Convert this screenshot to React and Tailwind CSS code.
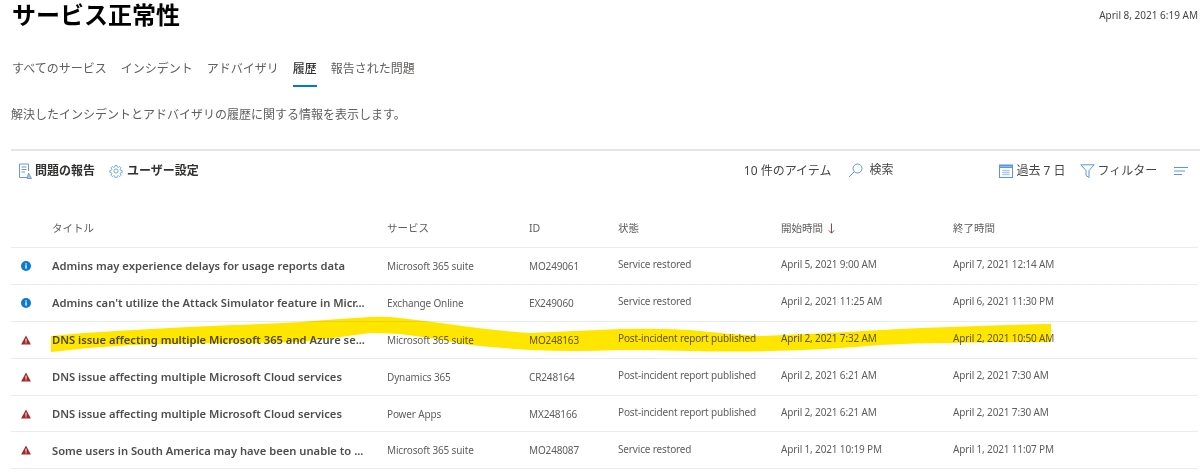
import React from "react";

const rows = [
  { k: "info", t: "Admins may experience delays for usage reports data", s: "Microsoft 365 suite", id: "MO249061", st: "Service restored", a: "April 5, 2021 9:00 AM", b: "April 7, 2021 12:14 AM" },
  { k: "info", t: "Admins can't utilize the Attack Simulator feature in Micr...", s: "Exchange Online", id: "EX249060", st: "Service restored", a: "April 2, 2021 11:25 AM", b: "April 6, 2021 11:30 PM" },
  { k: "warn", t: "DNS issue affecting multiple Microsoft 365 and Azure se...", s: "Microsoft 365 suite", id: "MO248163", st: "Post-incident report published", a: "April 2, 2021 7:32 AM", b: "April 2, 2021 10:50 AM" },
  { k: "warn", t: "DNS issue affecting multiple Microsoft Cloud services", s: "Dynamics 365", id: "CR248164", st: "Post-incident report published", a: "April 2, 2021 6:21 AM", b: "April 2, 2021 7:30 AM" },
  { k: "warn", t: "DNS issue affecting multiple Microsoft Cloud services", s: "Power Apps", id: "MX248166", st: "Post-incident report published", a: "April 2, 2021 6:21 AM", b: "April 2, 2021 7:30 AM" },
  { k: "warn", t: "Some users in South America may have been unable to ...", s: "Microsoft 365 suite", id: "MO248087", st: "Service restored", a: "April 1, 2021 10:19 PM", b: "April 1, 2021 11:07 PM" },
];

const cols = "grid grid-cols-[41px_335px_142px_89px_163px_172px_1fr] items-center";

function InfoIcon() {
  return (
    <svg width="10" height="10" viewBox="0 0 10 10" className="ml-[10px]">
      <circle cx="5" cy="5" r="5" fill="#0b78d4" />
      <rect x="4.3" y="4.2" width="1.4" height="3.4" fill="#fff" />
      <rect x="4.3" y="2.3" width="1.4" height="1.3" fill="#fff" />
    </svg>
  );
}

function WarnIcon() {
  return (
    <svg width="10" height="10" viewBox="0 0 10 10" className="ml-[10px]">
      <path d="M5 0.4 L9.9 9.6 H0.1 Z" fill="#a4262c" />
      <rect x="4.5" y="3.6" width="1" height="3.2" fill="#fff" />
      <rect x="4.5" y="7.4" width="1" height="1" fill="#fff" />
    </svg>
  );
}

function ReportIcon() {
  return (
    <svg width="14" height="16" viewBox="0 0 14 16" fill="none" stroke="#6b97d2" strokeWidth="1">
      <path d="M9 14.5H1.5V1H10.5V8" />
      <path d="M3.5 4H8.5M3.5 6.5H8.5M3.5 9H7" />
      <path d="M9 15.5 L10.5 10 L13.5 15.5 Z" fill="#a9c5ea" stroke="#5a8fd0" strokeWidth="0.8" />
    </svg>
  );
}

function GearIcon() {
  return (
    <svg width="14" height="14" viewBox="0 0 24 24" fill="none" stroke="#6b9fdc" strokeWidth="1.6">
      <circle cx="12" cy="12" r="3.6" />
      <path d="M10.2 1.5h3.6l.6 3.1 1.9.8 2.6-1.8 2.5 2.5-1.8 2.6.8 1.9 3.1.6v3.6l-3.1.6-.8 1.9 1.8 2.6-2.5 2.5-2.6-1.8-1.9.8-.6 3.1h-3.6l-.6-3.1-1.9-.8-2.6 1.8-2.5-2.5 1.8-2.6-.8-1.9-3.1-.6v-3.6l3.1-.6.8-1.9-1.8-2.6 2.5-2.5 2.6 1.8 1.9-.8z" transform="translate(12 12) scale(.92) translate(-12 -12)" />
    </svg>
  );
}

function SearchIcon() {
  return (
    <svg width="15" height="15" viewBox="0 0 15 15" fill="none" stroke="#5a96dc" strokeWidth="1">
      <circle cx="9.5" cy="5.5" r="4.5" />
      <path d="M6.3 8.7 L1 14" />
    </svg>
  );
}

function CalendarIcon() {
  return (
    <svg width="14" height="14" viewBox="0 0 14 14" fill="none" stroke="#5a96dc" strokeWidth="1">
      <rect x="0.5" y="1" width="13" height="12.5" />
      <path d="M0.5 1.5H13.5V3.5H0.5Z" fill="#8fb8e8" />
      <path d="M3 6.5H11M3 8.5H11M3 10.5H11M5 5.5V11.5M7 5.5V11.5M9 5.5V11.5" strokeWidth="0.7" stroke="#9dc0ea" />
    </svg>
  );
}

function FilterIcon() {
  return (
    <svg width="15" height="14" viewBox="0 0 15 14" fill="none" stroke="#5a96dc" strokeWidth="1">
      <path d="M0.8 0.8H14.2L9 6.5V13.5L6 11.5V6.5Z" />
    </svg>
  );
}

function LinesIcon() {
  return (
    <svg width="14" height="10" viewBox="0 0 14 10" fill="none" stroke="#5a96dc" strokeWidth="1">
      <path d="M0 1.5H14M0 5H11M0 8.5H8" />
    </svg>
  );
}

function ArrowIcon() {
  return (
    <svg width="7" height="11" viewBox="0 0 7 11" fill="none" stroke="#8a4a4a" strokeWidth="1">
      <path d="M3.5 0.5V10M0.8 7.4L3.5 10.2L6.2 7.4" />
    </svg>
  );
}

export default function App() {
  return (
    <div className="relative w-[1200px] h-[476px] overflow-hidden bg-white font-['Noto_Sans','Noto_Sans_CJK_JP',sans-serif] text-[#323130]">
      <div className="flex justify-between items-start pl-[12px] pr-[2px] h-[30px]">
        <h1 className="text-[24px] leading-[30px] font-bold text-black">サービス正常性</h1>
        <span className="mt-[8px] text-[10px] leading-[14px] text-[#484644]">April 8, 2021 6:19 AM</span>
      </div>

      <div className="flex gap-[14px] pl-[12px] mt-[29px] text-[12px] text-[#605e5c]">
        <div className="h-[27px] leading-[20px]">すべてのサービス</div>
        <div className="h-[27px] leading-[20px]">インシデント</div>
        <div className="h-[27px] leading-[20px]">アドバイザリ</div>
        <div className="h-[28px] leading-[20px] font-medium text-[#323130] border-b-2 border-[#0078d4]">履歴</div>
        <div className="h-[27px] leading-[20px]">報告された問題</div>
      </div>

      <p className="pl-[11px] mt-[18px] text-[12px] leading-[20px] text-[#605e5c]">解決したインシデントとアドバイザリの履歴に関する情報を表示します。</p>

      <div className="ml-[11px] mt-[24px] border-t-2 border-[#e5e5e5] h-[42px] flex items-center text-[12px] text-[#484644]">
        <div className="flex items-center gap-[3px] ml-[7px] font-semibold text-[#323130]">
          <ReportIcon />
          <span>問題の報告</span>
        </div>
        <div className="flex items-center gap-[4px] ml-[14px] font-semibold text-[#323130]">
          <GearIcon />
          <span>ユーザー設定</span>
        </div>
        <span className="ml-[545px]">10 件のアイテム</span>
        <div className="flex items-center gap-[6px] ml-[17px] -mt-[2px]">
          <SearchIcon />
          <span>検索</span>
        </div>
        <div className="flex items-center gap-[3px] ml-[106px]">
          <CalendarIcon />
          <span>過去 7 日</span>
        </div>
        <div className="flex items-center gap-[3px] ml-[14px]">
          <FilterIcon />
          <span>フィルター</span>
        </div>
        <div className="ml-[17px]"><LinesIcon /></div>
      </div>

      <div className="ml-[11px] mr-[2px] mt-[19px]">
        <div className={`${cols} h-[38px] border-b border-[#edebe9] text-[10.5px] text-[#605e5c]`}>
          <div />
          <div>タイトル</div>
          <div>サービス</div>
          <div>ID</div>
          <div>状態</div>
          <div className="flex items-center gap-[5px]">開始時間 <ArrowIcon /></div>
          <div>終了時間</div>
        </div>
        {rows.map((r, i) => (
          <div key={i} className={`${cols} h-[36.9px] border-b border-[#edebe9] text-[10px] tracking-[-0.15px] text-[#605e5c]`}>
            <div>{r.k === "info" ? <InfoIcon /> : <WarnIcon />}</div>
            <div className="pt-[1px] text-[11.2px] tracking-normal font-semibold text-[#504e4c] whitespace-nowrap">{r.t}</div>
            <div className="pt-[1px]">{r.s}</div>
            <div className="pt-[1px]">{r.id}</div>
            <div className="pb-[2px]">{r.st}</div>
            <div className="pb-[2px]">{r.a}</div>
            <div className="pb-[2px]">{r.b}</div>
          </div>
        ))}
      </div>

      <svg className="absolute left-0 top-0 pointer-events-none mix-blend-multiply" width="1200" height="476" viewBox="0 0 1200 476">
        <path
          d="M51 336 Q92 332 133 330 Q183 327 233 325 Q268 324 300 322 Q335 319 370 317 Q385 316 400 318 Q435 322 470 327 Q500 331 530 333 Q575 331 620 329 Q655 328 690 330 Q725 334 760 336 Q820 334 880 330 Q915 328 950 327 Q1000 325 1051 324 L1051 342 Q1000 342 950 343 Q915 343 880 345 Q825 350 770 351 Q730 352 690 351 Q655 350 620 350 Q575 352 530 350 Q500 348 470 345 Q435 338 400 334 Q385 333 370 333 Q335 338 300 342 Q268 343 233 343 Q183 343 133 345 Q92 347 51 352 Z"
          fill="#ffe600"
        />
      </svg>
    </div>
  );
}
